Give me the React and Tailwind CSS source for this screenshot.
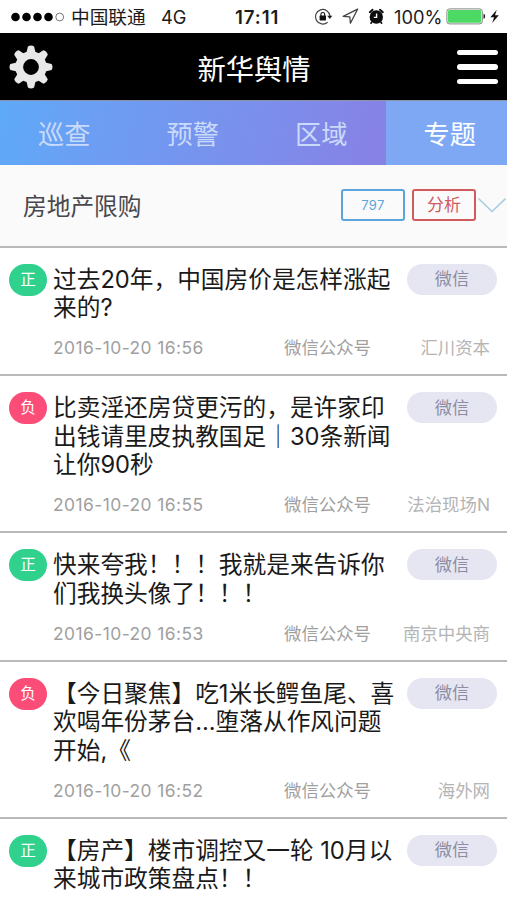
import { useState } from 'react';

const tabs = ['巡查', '预警', '区域', '专题'];

const news = [
  {
    id: 1,
    positive: true,
    lines: ['过去20年，中国房价是怎样涨起', '来的?'],
    time: '2016-10-20 16:56',
    source: '汇川资本',
  },
  {
    id: 2,
    positive: false,
    lines: ['比卖淫还房贷更污的，是许家印', '出钱请里皮执教国足｜30条新闻', '让你90秒'],
    time: '2016-10-20 16:55',
    source: '法治现场N',
  },
  {
    id: 3,
    positive: true,
    lines: ['快来夸我！！！我就是来告诉你', '们我换头像了！！！'],
    time: '2016-10-20 16:53',
    source: '南京中央商',
  },
  {
    id: 4,
    positive: false,
    lines: ['【今日聚焦】吃1米长鳄鱼尾、喜', '欢喝年份茅台...堕落从作风问题', '开始,《'],
    time: '2016-10-20 16:52',
    source: '海外网',
  },
  {
    id: 5,
    positive: true,
    lines: ['【房产】楼市调控又一轮 10月以', '来城市政策盘点！！'],
  },
];

function StatusBar() {
  return (
    <div className="flex h-[33px] items-center bg-white pl-[11px] text-[#1c1c1c]">
      <svg width="54" height="10" viewBox="0 0 54 10">
        <circle cx="4.5" cy="5" r="4.3" fill="#000" />
        <circle cx="15.5" cy="5" r="4.3" fill="#000" />
        <circle cx="26.5" cy="5" r="4.3" fill="#000" />
        <circle cx="37.5" cy="5" r="4.3" fill="#000" />
        <circle cx="48.7" cy="5" r="3.9" fill="none" stroke="#555" strokeWidth="0.8" />
      </svg>
      <span className="ml-[6px] w-[90px] pt-[3px] text-[18.7px] whitespace-nowrap">中国联通</span>
      <span className="w-[74px] pt-[2px] text-[18.3px]">4G</span>
      <span className="w-[79px] pt-[3px] text-[18.7px] font-semibold tracking-[0.9px]">17:11</span>
      {/* rotation lock */}
      <svg width="20" height="18" viewBox="0 0 20 18" fill="none">
        <path d="M13.6 14.2a7.3 7.3 0 1 1 2.4-6.2" stroke="#444" strokeWidth="1.2" />
        <path d="M13.2 7.8h5.2l-2.6 3.2z" fill="#222" />
        <rect x="5.6" y="7.6" width="6.4" height="4.8" rx="0.6" fill="#111" />
        <path d="M6.9 8V6.4a1.9 1.9 0 0 1 3.8 0V8" stroke="#111" strokeWidth="1.1" />
      </svg>
      {/* location arrow */}
      <svg className="ml-[8px]" width="17" height="17" viewBox="0 0 17 17" fill="none">
        <path d="M15.6 1.2 1.2 8.4l6.6.4.6 6.4z" stroke="#444" strokeWidth="1.3" strokeLinejoin="round" />
      </svg>
      {/* alarm */}
      <svg className="ml-[9px]" width="17" height="17" viewBox="0 0 17 17" fill="none">
        <circle cx="8.3" cy="9" r="6.7" fill="#0c0c0c" />
        <path d="M1.8 4.2 4.6 1.8M14.8 4.2 12 1.8" stroke="#0c0c0c" strokeWidth="2" strokeLinecap="round" />
        <path d="m4 13.8-1.4 2M12.6 13.8l1.4 2" stroke="#0c0c0c" strokeWidth="1.6" />
        <path d="M8.6 5.4v4H5.8" stroke="#fff" strokeWidth="1.4" />
      </svg>
      <span className="ml-[9px] w-[52px] pt-[2px] text-[18.3px] whitespace-nowrap">100%</span>
      <svg width="55" height="17" viewBox="0 0 55 17" fill="none">
        <rect x="0.9" y="0.9" width="35.4" height="15" rx="2.6" stroke="#777" strokeWidth="0.9" />
        <rect x="2" y="2" width="33.2" height="12.8" rx="1.4" fill="#4cd964" />
        <path d="M37.5 5.8c2.2.6 2.2 4.6 0 5.2z" fill="#222" />
        <path d="M50.8 1.8 44.4 9.2h3.7l-1.9 5.9 6.6-7.8H49z" fill="#111" />
      </svg>
    </div>
  );
}

function Header() {
  return (
    <header className="flex h-[67px] items-center justify-between bg-black px-[9px]">
      <svg width="44" height="44" viewBox="-22 -22 44 44">
        <g fill="#e8e8e8">
          <circle r="11.8" fill="none" stroke="#e8e8e8" strokeWidth="7.8" />
          <path id="tooth" d="M-4.6-14.3-3.1-20.6Q0-22.4 3.1-20.6L4.6-14.3z" />
          <use href="#tooth" transform="rotate(45)" />
          <use href="#tooth" transform="rotate(90)" />
          <use href="#tooth" transform="rotate(135)" />
          <use href="#tooth" transform="rotate(180)" />
          <use href="#tooth" transform="rotate(225)" />
          <use href="#tooth" transform="rotate(270)" />
          <use href="#tooth" transform="rotate(315)" />
        </g>
      </svg>
      <h1 className="pt-[7px] pr-[2px] text-[28.3px] leading-none text-white">新华舆情</h1>
      <button className="flex w-[41px] flex-col gap-[9px] pt-[1px]">
        <span className="h-[5.3px] rounded-full bg-white" />
        <span className="h-[5.3px] rounded-full bg-white" />
        <span className="h-[5.3px] rounded-full bg-white" />
      </button>
    </header>
  );
}

function NewsItem({ item }) {
  return (
    <li className="flex border-b-2 border-[#b9b9b9] pt-[16px] pl-[9px] last:border-b-0">
      <span
        className={`flex h-[32px] w-[38px] shrink-0 items-center justify-center rounded-[16px] text-[15.6px] text-white ${item.positive ? 'bg-[#2fd18d]' : 'bg-[#fb4d78]'}`}
      >
        {item.positive ? '正' : '负'}
      </span>
      <div className="ml-[6px] min-w-0 flex-1">
        <div className="flex justify-between pr-[10px]">
          <h2 className="w-[350px] pt-[2px] text-[23.7px] leading-[28.4px] text-[#1a1a1a]">
            {item.lines.map((line) => (
              <span key={line} className="block whitespace-nowrap">{line}</span>
            ))}
          </h2>
          <span className="flex h-[31px] w-[90px] shrink-0 items-center justify-center rounded-full bg-[#e6e6f2] text-[17.2px] text-[#8c8ca3]">
            微信
          </span>
        </div>
        {item.time && (
          <div className="flex h-[51.8px] items-center pr-[17px] text-[17.4px] whitespace-nowrap text-[#a0a0a0]">
            <span className="w-[231px] tracking-[0.45px]">{item.time}</span>
            <span>微信公众号</span>
            <span className="ml-auto text-[#b4b4b4]">{item.source}</span>
          </div>
        )}
      </div>
    </li>
  );
}

function App() {
  const [active, setActive] = useState(3);

  return (
    <div className="h-[900px] w-[507px] overflow-hidden bg-white font-['Inter','Noto_Sans_CJK_SC',sans-serif] [text-spacing-trim:space-all]">
      <StatusBar />
      <Header />
      <nav className="flex h-[65px] overflow-hidden border-t border-[#8a93a8] bg-[linear-gradient(105deg,#5eaaf8_0px,#6b9ff4_90px,#8980e4_400px)]">
        {tabs.map((tab, i) => (
          <button
            key={tab}
            onClick={() => setActive(i)}
            className={`w-[128.5px] shrink-0 pt-[4px] text-[26.2px] ${i === active ? 'bg-[#7fa8f4] text-white' : 'text-[#c9dafa]'}`}
          >
            {tab}
          </button>
        ))}
      </nav>
      <section className="flex h-[82.5px] items-center border-b-2 border-[#b9b9b9] bg-[#fafafa] pl-[23px]">
        <h2 className="flex-1 pt-[3px] text-[23.7px] text-[#48484e]">房地产限购</h2>
        <span className="flex h-[32px] w-[64px] items-center justify-center rounded-[3px] border-2 border-[#5ba5dc] text-[13px] tracking-[0.3px] text-[#5ba5dc]">
          797
        </span>
        <span className="ml-[7px] flex h-[32px] w-[64px] items-center justify-center rounded-[3px] border-2 border-[#cf5b5e] text-[17px] text-[#cf5b5e]">
          分析
        </span>
        <svg className="mr-[1px] ml-[1px]" width="29" height="18" viewBox="0 0 29 18" fill="none">
          <path d="M1.5 2.5 15 15.5 28.5 2.5" stroke="#a9cbe0" strokeWidth="1.6" />
        </svg>
      </section>
      <ul>
        {news.map((item) => (
          <NewsItem key={item.id} item={item} />
        ))}
      </ul>
    </div>
  );
}

export default App;
